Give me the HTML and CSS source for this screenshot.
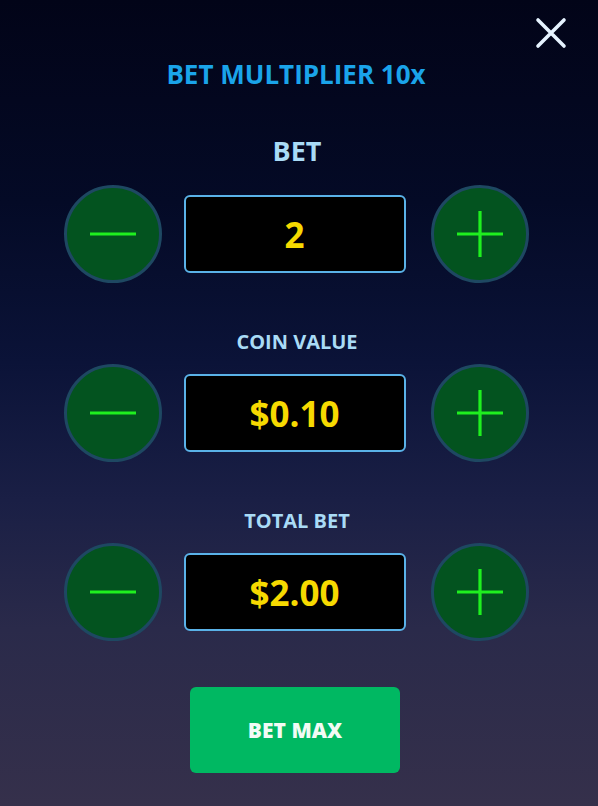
FILE: index.html
```html
<!DOCTYPE html>
<html>
<head>
  <title>Bet Settings</title>
  <link rel="stylesheet" href="styles.css">
</head>
<body>
  <div class="panel">
    <button class="close-button" aria-label="Close">
      <svg width="32" height="32" viewBox="0 0 32 32">
        <path d="M3 3 L29 29 M29 3 L3 29" stroke="#e6f3ff" stroke-width="3.6" stroke-linecap="round" fill="none"/>
      </svg>
    </button>

    <h1 class="title">BET MULTIPLIER 10x</h1>

    <div class="label label-big">BET</div>
    <div class="stepper stepper-first">
      <button class="round-button minus"><svg width="48" height="48" viewBox="0 0 48 48"><path d="M1 24 H47" stroke="#1ff01f" stroke-width="3.2"/></svg></button>
      <div class="value">2</div>
      <button class="round-button plus"><svg width="48" height="48" viewBox="0 0 48 48"><path d="M1 24 H47 M24 1 V47" stroke="#1ff01f" stroke-width="3.2"/></svg></button>
    </div>

    <div class="label">COIN VALUE</div>
    <div class="stepper">
      <button class="round-button minus"><svg width="48" height="48" viewBox="0 0 48 48"><path d="M1 24 H47" stroke="#1ff01f" stroke-width="3.2"/></svg></button>
      <div class="value">$0.10</div>
      <button class="round-button plus"><svg width="48" height="48" viewBox="0 0 48 48"><path d="M1 24 H47 M24 1 V47" stroke="#1ff01f" stroke-width="3.2"/></svg></button>
    </div>

    <div class="label">TOTAL BET</div>
    <div class="stepper">
      <button class="round-button minus"><svg width="48" height="48" viewBox="0 0 48 48"><path d="M1 24 H47" stroke="#1ff01f" stroke-width="3.2"/></svg></button>
      <div class="value">$2.00</div>
      <button class="round-button plus"><svg width="48" height="48" viewBox="0 0 48 48"><path d="M1 24 H47 M24 1 V47" stroke="#1ff01f" stroke-width="3.2"/></svg></button>
    </div>

    <button class="max-button">BET MAX</button>
  </div>
</body>
</html>
```

FILE: styles.css
```css
body {
  margin: 0;
  font-family: 'Open Sans', 'Noto Sans', sans-serif;
  background-color: #020418;
}

.panel {
  position: relative;
  width: 598px;
  height: 806px;
  box-sizing: border-box;
  padding-top: 59px;
  display: flex;
  flex-direction: column;
  align-items: center;
  background: linear-gradient(to bottom, #020418 0%, #040a26 25%, #0b1338 45%, #1a1f45 62%, #2a2a4a 78%, #35304b 100%);
}

.close-button {
  position: absolute;
  top: 17px;
  right: 31px;
  width: 32px;
  height: 32px;
  padding: 0;
  border: none;
  background: none;
  cursor: pointer;
}

.close-button svg {
  display: block;
}

.title {
  margin: 0 6px 0 0;
  font-size: 26px;
  line-height: 30px;
  font-weight: 700;
  color: #1aa4ea;
}

.label {
  margin-top: 43px;
  margin-right: 4px;
  font-size: 20px;
  line-height: 30px;
  font-weight: 700;
  color: #a9dbf6;
}

.label-big {
  margin-top: 47px;
  font-size: 27px;
}

.stepper {
  display: flex;
  align-items: center;
  gap: 22px;
  margin-top: 6px;
  height: 100px;
  padding-right: 6px;
}

.stepper-first {
  margin-top: 18px;
}

.round-button {
  width: 98px;
  height: 98px;
  box-sizing: border-box;
  padding: 0;
  border-radius: 50%;
  border: 3px solid #1e4862;
  background-color: #03531f;
  display: flex;
  justify-content: center;
  align-items: center;
  cursor: pointer;
}

.round-button svg {
  display: block;
}

.plus {
  margin-left: 3px;
}

.value {
  width: 222px;
  height: 78px;
  box-sizing: border-box;
  border: 2px solid #5ab2e8;
  border-radius: 6px;
  background-color: #000;
  color: #f6d900;
  font-size: 35px;
  font-weight: 700;
  display: flex;
  justify-content: center;
  align-items: center;
}

.max-button {
  margin-top: 45px;
  margin-right: 8px;
  width: 210px;
  height: 86px;
  border: none;
  border-radius: 6px;
  background-color: #00b862;
  color: #f2fbf5;
  font-family: 'Open Sans', 'Noto Sans', sans-serif;
  font-size: 21px;
  font-weight: 800;
  cursor: pointer;
}
```
